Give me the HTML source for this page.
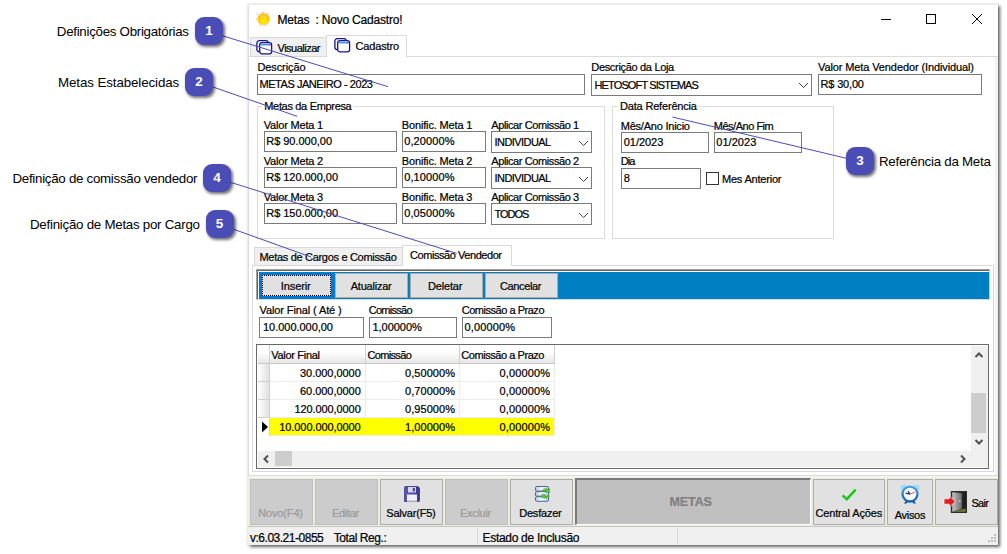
<!DOCTYPE html>
<html><head><meta charset="utf-8"><title>Metas</title>
<style>
html,body{margin:0;padding:0;background:#fff;}
body{width:1007px;height:554px;position:relative;overflow:hidden;font-family:'Liberation Sans', sans-serif;}
div,span.t,svg{position:absolute;box-sizing:border-box;}
span.t{white-space:pre;-webkit-text-stroke:0.22px currentColor;}
span.a{-webkit-text-stroke:0;}
</style></head><body>
<div style="left:246px;top:3px;width:753px;height:543px;background:#f5f5f5;"></div>
<div style="left:248px;top:4px;width:750px;height:541px;background:#fff;box-shadow:2px 2px 3px 0px rgba(0,0,0,.6);border-top:1px solid #ececec;border-left:1px solid #e0e0e0;"></div>
<svg style="left:255px;top:10px" width="18" height="18" viewBox="0 0 18 18"><defs><radialGradient id="sun" cx=".5" cy=".72" r=".75"><stop offset="0" stop-color="#fff400"/><stop offset=".55" stop-color="#ffd000"/><stop offset=".85" stop-color="#ffb000"/><stop offset="1" stop-color="#ff9800"/></radialGradient></defs><g fill="#ffa21a" opacity=".75"><circle cx="2.300" cy="4.200" r=".6"/><circle cx="1.500" cy="9.300" r=".7"/><circle cx="5.200" cy="15.200" r=".7"/><circle cx="10.500" cy="15.300" r=".7"/><circle cx="15" cy="10" r=".6"/><circle cx="13" cy="3.800" r=".7"/><circle cx="8" cy="2.600" r=".8"/><circle cx="3.300" cy="12.500" r=".6"/></g><circle cx="8.600" cy="9" r="6.300" fill="#ffb43c" opacity=".5"/><circle cx="8.600" cy="9" r="5.600" fill="url(#sun)"/><ellipse cx="8.600" cy="6" rx="3.600" ry="1.700" fill="#ffe060" opacity=".55"/></svg>
<svg style="left:876px;top:9px" width="112" height="20" viewBox="0 0 112 20" fill="none" stroke="#000" stroke-width="1"><path d="M5 10.5h10"/><rect x="50.5" y="5.5" width="9" height="9"/><path d="M96 5l10 10M106 5l-10 10"/></svg>
<div style="left:248px;top:56px;width:750px;height:420px;background:#fff;border:1px solid #dcdcdc;"></div>
<div style="left:995px;top:57px;width:3px;height:418px;background:#f3f3f3;"></div>
<div style="left:250px;top:37px;width:77px;height:20px;background:#f0f0f0;border:1px solid #d9d9d9;"></div>
<div style="left:326px;top:35px;width:81px;height:22px;background:#fff;border:1px solid #d9d9d9;border-bottom:none;"></div>
<svg style="left:256px;top:39.5px" width="17" height="15" viewBox="0 0 17 15" fill="#fff" stroke="#15158c" stroke-width="1.3"><rect x="0.9" y="0.7" width="11.2" height="11" rx="2.2"/><rect x="3.700" y="2.600" width="11.900" height="11.200" rx="2.200"/><path d="M4.600 4.600h10.200" stroke="#3f92ee" stroke-width="1.700"/><path d="M13.300 4.600h1.300" stroke="#e03030" stroke-width="1.200"/></svg>
<svg style="left:334px;top:37.5px" width="17" height="15" viewBox="0 0 17 15" fill="#fff" stroke="#15158c" stroke-width="1.3"><rect x="0.9" y="0.7" width="11.2" height="11" rx="2.2"/><rect x="3.700" y="2.600" width="11.900" height="11.200" rx="2.200"/><path d="M4.600 4.600h10.200" stroke="#3f92ee" stroke-width="1.700"/><path d="M13.300 4.600h1.300" stroke="#e03030" stroke-width="1.200"/></svg>
<div style="left:257px;top:74px;width:328px;height:21px;background:#fff;border:1px solid #7a7a7a;"></div>
<div style="left:591px;top:74px;width:221px;height:22px;background:#fff;border:1px solid #7a7a7a;"></div>
<svg style="left:798px;top:82px" width="11" height="7" viewBox="0 0 11 7" fill="none" stroke="#404040" stroke-width="1"><path d="M1 1l4.5 4.5L10 1"/></svg>
<div style="left:818px;top:74px;width:164px;height:21px;background:#fff;border:1px solid #7a7a7a;"></div>
<div style="left:257px;top:106px;width:348px;height:133px;border:1px solid #dcdcdc;"></div>
<div style="left:612px;top:106px;width:222px;height:133px;border:1px solid #dcdcdc;"></div>
<div style="left:262px;top:100px;width:92px;height:12px;background:#fff;"></div>
<div style="left:618px;top:100px;width:81px;height:12px;background:#fff;"></div>
<div style="left:264px;top:131px;width:133px;height:21px;background:#fff;border:1px solid #7a7a7a;"></div>
<div style="left:402px;top:131px;width:84px;height:21px;background:#fff;border:1px solid #7a7a7a;"></div>
<div style="left:491px;top:131px;width:101px;height:22px;background:#fff;border:1px solid #7a7a7a;"></div>
<svg style="left:577.5px;top:139.5px" width="11" height="7" viewBox="0 0 11 7" fill="none" stroke="#404040" stroke-width="1"><path d="M1 1l4.5 4.5L10 1"/></svg>
<div style="left:264px;top:167px;width:133px;height:21px;background:#fff;border:1px solid #7a7a7a;"></div>
<div style="left:402px;top:167px;width:84px;height:21px;background:#fff;border:1px solid #7a7a7a;"></div>
<div style="left:491px;top:167px;width:101px;height:22px;background:#fff;border:1px solid #7a7a7a;"></div>
<svg style="left:577.5px;top:175.5px" width="11" height="7" viewBox="0 0 11 7" fill="none" stroke="#404040" stroke-width="1"><path d="M1 1l4.5 4.5L10 1"/></svg>
<div style="left:264px;top:203px;width:133px;height:21px;background:#fff;border:1px solid #7a7a7a;"></div>
<div style="left:402px;top:203px;width:84px;height:21px;background:#fff;border:1px solid #7a7a7a;"></div>
<div style="left:491px;top:203px;width:101px;height:22px;background:#fff;border:1px solid #7a7a7a;"></div>
<svg style="left:577.5px;top:211.5px" width="11" height="7" viewBox="0 0 11 7" fill="none" stroke="#404040" stroke-width="1"><path d="M1 1l4.5 4.5L10 1"/></svg>
<div style="left:621px;top:132px;width:88px;height:21px;background:#fff;border:1px solid #7a7a7a;"></div>
<div style="left:714px;top:132px;width:88px;height:21px;background:#fff;border:1px solid #7a7a7a;"></div>
<div style="left:621px;top:168px;width:80px;height:21px;background:#fff;border:1px solid #7a7a7a;"></div>
<div style="left:706px;top:172px;width:13px;height:13px;background:#fff;border:1px solid #333;"></div>
<div style="left:252px;top:265px;width:742px;height:207px;background:#fff;border:1px solid #d9d9d9;"></div>
<div style="left:254px;top:247px;width:149px;height:19px;background:#f0f0f0;border:1px solid #d9d9d9;"></div>
<div style="left:402px;top:245px;width:110px;height:21px;background:#fff;border:1px solid #d9d9d9;border-bottom:none;"></div>
<div style="left:256px;top:269px;width:734px;height:31px;background:#fff;border-top:1px solid #a0a0a0;border-left:1px solid #a0a0a0;border-right:1px solid #c8c8c8;border-bottom:1px solid #d8d8d8;"></div>
<div style="left:257px;top:270px;width:732px;height:29px;border-top:1px solid #646464;border-left:1px solid #646464;"></div>
<div style="left:259px;top:272px;width:730px;height:27px;background:#007fc3;"></div>
<div style="left:260px;top:273px;width:73px;height:25px;background:#e1e1e1;border:2px solid #0078d7;"><div style="left:0;top:0;right:0;bottom:0;border:1px dotted #000;"></div></div>
<div style="left:335px;top:273px;width:73px;height:25px;background:#e1e1e1;border:1px solid #adadad;"></div>
<div style="left:410px;top:273px;width:73px;height:25px;background:#e1e1e1;border:1px solid #adadad;"></div>
<div style="left:485px;top:273px;width:73px;height:25px;background:#e1e1e1;border:1px solid #adadad;"></div>
<div style="left:259px;top:317px;width:105px;height:21px;background:#fff;border:1px solid #7a7a7a;"></div>
<div style="left:369px;top:317px;width:88px;height:21px;background:#fff;border:1px solid #7a7a7a;"></div>
<div style="left:462px;top:317px;width:90px;height:21px;background:#fff;border:1px solid #7a7a7a;"></div>
<div style="left:256px;top:344px;width:733px;height:125px;background:#fff;border:1px solid #696969;"></div>
<div style="left:258px;top:345px;width:12px;height:19px;background:linear-gradient(#fff,#fff 40%,#e6e6e6);border-right:1px solid #d0d0d0;border-bottom:1px solid #c8c8c8;"></div>
<div style="left:270px;top:345px;width:96px;height:19px;background:linear-gradient(#fff,#fff 40%,#e6e6e6);border-right:1px solid #d0d0d0;border-bottom:1px solid #c8c8c8;"></div>
<div style="left:366px;top:345px;width:94px;height:19px;background:linear-gradient(#fff,#fff 40%,#e6e6e6);border-right:1px solid #d0d0d0;border-bottom:1px solid #c8c8c8;"></div>
<div style="left:460px;top:345px;width:95px;height:19px;background:linear-gradient(#fff,#fff 40%,#e6e6e6);border-right:1px solid #d0d0d0;border-bottom:1px solid #c8c8c8;"></div>
<div style="left:258px;top:364px;width:12px;height:18px;background:linear-gradient(90deg,#fff,#e0e0e0);border-right:1px solid #d0d0d0;border-bottom:1px solid #d0d0d0;"></div>
<div style="left:270px;top:364px;width:96px;height:18px;background:#fff;border-right:1px solid #ececec;border-bottom:1px solid #ececec;"></div>
<div style="left:366px;top:364px;width:94px;height:18px;background:#fff;border-right:1px solid #ececec;border-bottom:1px solid #ececec;"></div>
<div style="left:460px;top:364px;width:95px;height:18px;background:#fff;border-right:1px solid #ececec;border-bottom:1px solid #ececec;"></div>
<div style="left:258px;top:382px;width:12px;height:18px;background:linear-gradient(90deg,#fff,#e0e0e0);border-right:1px solid #d0d0d0;border-bottom:1px solid #d0d0d0;"></div>
<div style="left:270px;top:382px;width:96px;height:18px;background:#fff;border-right:1px solid #ececec;border-bottom:1px solid #ececec;"></div>
<div style="left:366px;top:382px;width:94px;height:18px;background:#fff;border-right:1px solid #ececec;border-bottom:1px solid #ececec;"></div>
<div style="left:460px;top:382px;width:95px;height:18px;background:#fff;border-right:1px solid #ececec;border-bottom:1px solid #ececec;"></div>
<div style="left:258px;top:400px;width:12px;height:18px;background:linear-gradient(90deg,#fff,#e0e0e0);border-right:1px solid #d0d0d0;border-bottom:1px solid #d0d0d0;"></div>
<div style="left:270px;top:400px;width:96px;height:18px;background:#fff;border-right:1px solid #ececec;border-bottom:1px solid #ececec;"></div>
<div style="left:366px;top:400px;width:94px;height:18px;background:#fff;border-right:1px solid #ececec;border-bottom:1px solid #ececec;"></div>
<div style="left:460px;top:400px;width:95px;height:18px;background:#fff;border-right:1px solid #ececec;border-bottom:1px solid #ececec;"></div>
<div style="left:258px;top:418px;width:12px;height:18px;background:#fff;border-right:1px solid #d0d0d0;"></div>
<div style="left:270px;top:418px;width:96px;height:18px;background:#ffff00;border-right:1px solid #ececec;border-bottom:1px solid #ececec;"></div>
<div style="left:366px;top:418px;width:94px;height:18px;background:#ffff00;border-right:1px solid #ececec;border-bottom:1px solid #ececec;"></div>
<div style="left:460px;top:418px;width:95px;height:18px;background:#ffff00;border-right:1px solid #ececec;border-bottom:1px solid #ececec;"></div>
<svg style="left:260.500px;top:420.500px" width="8" height="12" viewBox="0 0 8 12"><path d="M1 0.5l6 5.5-6 5.5z" fill="#000"/></svg>
<div style="left:971px;top:346px;width:17px;height:105px;background:#f0f0f0;"></div>
<div style="left:971px;top:393px;width:15px;height:40px;background:#cdcdcd;"></div>
<div style="left:258px;top:451px;width:730px;height:16px;background:#f0f0f0;"></div>
<div style="left:275px;top:451px;width:17px;height:15px;background:#cdcdcd;"></div>
<svg style="left:974px;top:350px" width="10" height="10" viewBox="0 0 10 10" fill="none" stroke="#505050" stroke-width="2"><path d="M1.5 7l3.5-3.5L8.500 7"/></svg>
<svg style="left:974px;top:437px" width="10" height="10" viewBox="0 0 10 10" fill="none" stroke="#505050" stroke-width="2"><path d="M1.5 3l3.5 3.500L8.500 3"/></svg>
<svg style="left:261px;top:454px" width="10" height="10" viewBox="0 0 10 10" fill="none" stroke="#505050" stroke-width="2"><path d="M7 1.5l-3.500 3.5L7 8.500"/></svg>
<svg style="left:957.5px;top:454px" width="10" height="10" viewBox="0 0 10 10" fill="none" stroke="#505050" stroke-width="2"><path d="M3 1.5l3.500 3.5L3 8.500"/></svg>
<div style="left:248px;top:476px;width:750px;height:2px;background:#f4f4f4;"></div>
<div style="left:248px;top:478px;width:750px;height:48px;background:#ededda;"></div>
<div style="left:250px;top:479px;width:63px;height:46px;background:#cccccc;border:1px solid #bfbfbf;"></div>
<div style="left:315px;top:479px;width:63px;height:46px;background:#cccccc;border:1px solid #bfbfbf;"></div>
<div style="left:380px;top:479px;width:63px;height:46px;background:#e1e1e1;border:1px solid #adadad;"></div>
<div style="left:445px;top:479px;width:63px;height:46px;background:#cccccc;border:1px solid #bfbfbf;"></div>
<div style="left:510px;top:479px;width:63px;height:46px;background:#e1e1e1;border:1px solid #adadad;"></div>
<div style="left:575px;top:478px;width:236px;height:47px;background:#c0c0c0;border-top:2px solid #7a7a7a;border-left:2px solid #7a7a7a;border-right:1px solid #fff;border-bottom:1px solid #fff;"></div>
<div style="left:813px;top:479px;width:72px;height:46px;background:#e1e1e1;border:1px solid #adadad;"></div>
<div style="left:887px;top:479px;width:46px;height:46px;background:#e1e1e1;border:1px solid #adadad;"></div>
<div style="left:935px;top:479px;width:63px;height:46px;background:#e1e1e1;border:1px solid #adadad;"></div>
<div style="left:248px;top:526px;width:750px;height:19px;background:#f0f0f0;border-top:1px solid #c4c4c4;"></div>
<div style="left:477px;top:528px;width:1px;height:16px;background:#d7d7d7;"></div>
<div style="left:677px;top:528px;width:1px;height:16px;background:#d7d7d7;"></div>
<svg style="left:986px;top:534px" width="11" height="11" viewBox="0 0 11 11" fill="#bfbfbf"><rect x="8" y="0" width="2" height="2"/><rect x="5" y="3" width="2" height="2"/><rect x="8" y="3" width="2" height="2"/><rect x="2" y="6" width="2" height="2"/><rect x="5" y="6" width="2" height="2"/><rect x="8" y="6" width="2" height="2"/></svg>
<svg style="left:404px;top:486px" width="16" height="16" viewBox="0 0 16 16"><defs><linearGradient id="fl" x1="0" x2="1"><stop offset="0" stop-color="#5a5ab4"/><stop offset="1" stop-color="#3a3a92"/></linearGradient></defs><path d="M0.500 1.500q0-1 1-1h12.500l1.500 1.500v12.500q0 1-1 1h-13.500q-1 0-1-1z" fill="url(#fl)" stroke="#33338a" stroke-width=".8"/><rect x="4" y="1" width="8" height="5.500" fill="#d4d8ee"/><rect x="8.800" y="1.800" width="2" height="3.600" fill="#3a3a92"/><rect x="3" y="8.500" width="10" height="7" fill="#f2f2f6"/><path d="M3 15h10" stroke="#b0b0c8" stroke-width="1"/></svg>
<svg style="left:535px;top:486px" width="16" height="16" viewBox="0 0 16 16"><defs><linearGradient id="db" x1="0" x2="1"><stop offset="0" stop-color="#b9c9dc"/><stop offset=".45" stop-color="#f4f8fc"/><stop offset="1" stop-color="#c4d2e2"/></linearGradient></defs><g fill="url(#db)" stroke="#4a6896" stroke-width="1"><rect x=".5" y=".5" width="13" height="4.600" rx="1.200"/><rect x=".5" y="5.600" width="13" height="4.600" rx="1.200"/><rect x=".5" y="10.700" width="13" height="4.600" rx="1.200"/></g><path d="M7.500 4.200q3-3 6-.5l1-1 .3 3.800-3.800-.3 1.100-1q-1.800-1.400-3.500.2z" fill="#58d030" stroke="#2e9a1a" stroke-width=".5"/><path d="M14.500 10.300q-3 3.500-6.500 1l-1 1-.3-3.800 3.800.3-1.100 1q2 1.500 3.800-.5z" fill="#58d030" stroke="#2e9a1a" stroke-width=".5"/></svg>
<svg style="left:841px;top:488px" width="17" height="13" viewBox="0 0 17 13"><path d="M1.600 7.400l4.200 3.800L14.700 1.600" fill="none" stroke="#1cc81c" stroke-width="2.500"/></svg>
<svg style="left:900px;top:484px" width="20" height="20" viewBox="0 0 20 20"><defs><linearGradient id="ck" x1="0" y1="0" x2="0" y2="1"><stop offset="0" stop-color="#4aa6e8"/><stop offset="1" stop-color="#0e5aa8"/></linearGradient></defs><circle cx="3.600" cy="3.800" r="3.200" fill="#a8daf6"/><circle cx="16.400" cy="3.800" r="3.200" fill="#a8daf6"/><path d="M4 19.500l2.500-3.500h7l2.500 3.500h-2.500l-1-1.200h-5l-1 1.200z" fill="#0e4c94"/><circle cx="10" cy="10" r="8.600" fill="url(#ck)"/><circle cx="10" cy="10" r="6.300" fill="#fff"/><path d="M10 10.200l-4.500-1M10 10.200l-2-3" stroke="#1c3c78" stroke-width="1.300" fill="none"/><path d="M10 10.200l5-2" stroke="#e04040" stroke-width=".9"/></svg>
<svg style="left:943px;top:490px" width="25" height="24" viewBox="0 0 25 24"><defs><linearGradient id="dr" x1="0" x2="1"><stop offset="0" stop-color="#c4c4c4"/><stop offset="1" stop-color="#6e6e6e"/></linearGradient><linearGradient id="dk" x1="0" x2="1"><stop offset="0" stop-color="#666"/><stop offset="1" stop-color="#161616"/></linearGradient></defs><rect x="7.800" y="1" width="16.200" height="22" fill="#2c2c2c"/><rect x="9.300" y="2.300" width="13.400" height="19.400" fill="url(#dk)"/><path d="M11 21.700l11.700-3.200v3.200z" fill="#76802e"/><path d="M9.300 2.300l9.400 1.200v15.200l-9.400 3z" fill="url(#dr)"/><circle cx="16.800" cy="11" r=".8" fill="#eee"/><path d="M1 8.800h5.300V5.600l6 5.900-6 5.900v-3.200H1z" fill="#e01c24" stroke="#fff" stroke-width=".9" stroke-opacity=".85"/></svg>
<span class="t" style="left:277.50px;top:14.00px;font-size:12px;line-height:12px;letter-spacing:-0.200px;color:#000;">Metas  : Novo Cadastro!</span>
<span class="t" style="left:277.50px;top:43.00px;font-size:11px;line-height:11px;letter-spacing:-0.500px;color:#000;">Visualizar</span>
<span class="t" style="left:355.50px;top:41.00px;font-size:11px;line-height:11px;letter-spacing:-0.163px;color:#000;">Cadastro</span>
<span class="t" style="left:257.50px;top:62.00px;font-size:11px;line-height:11px;letter-spacing:-0.113px;color:#000;">Descrição</span>
<span class="t" style="left:259.50px;top:79.00px;font-size:11px;line-height:11px;letter-spacing:-0.451px;color:#000;">METAS JANEIRO - 2023</span>
<span class="t" style="left:591.25px;top:62.00px;font-size:11px;line-height:11px;letter-spacing:-0.316px;color:#000;">Descrição da Loja</span>
<span class="t" style="left:594.50px;top:80.00px;font-size:11px;line-height:11px;letter-spacing:-0.870px;color:#000;">HETOSOFT SISTEMAS</span>
<span class="t" style="left:818.00px;top:62.00px;font-size:11px;line-height:11px;letter-spacing:-0.109px;color:#000;">Valor Meta Vendedor (Individual)</span>
<span class="t" style="left:820.60px;top:79.00px;font-size:11px;line-height:11px;letter-spacing:-0.179px;color:#000;">R$ 30,00</span>
<span class="t" style="left:264.25px;top:101.00px;font-size:11px;line-height:11px;letter-spacing:-0.322px;color:#000;">Metas da Empresa</span>
<span class="t" style="left:620.00px;top:101.00px;font-size:11px;line-height:11px;letter-spacing:-0.179px;color:#000;">Data Referência</span>
<span class="t" style="left:263.75px;top:120.00px;font-size:11px;line-height:11px;letter-spacing:-0.188px;color:#000;">Valor Meta 1</span>
<span class="t" style="left:266.25px;top:136.00px;font-size:11px;line-height:11px;letter-spacing:-0.028px;color:#000;">R$ 90.000,00</span>
<span class="t" style="left:401.75px;top:120.00px;font-size:11px;line-height:11px;letter-spacing:-0.144px;color:#000;">Bonific. Meta 1</span>
<span class="t" style="left:404.25px;top:136.00px;font-size:11px;line-height:11px;letter-spacing:0.100px;color:#000;">0,20000%</span>
<span class="t" style="left:491.25px;top:120.00px;font-size:11px;line-height:11px;letter-spacing:-0.398px;color:#000;">Aplicar Comissão 1</span>
<span class="t" style="left:494.50px;top:137.00px;font-size:11px;line-height:11px;letter-spacing:-0.556px;color:#000;">INDIVIDUAL</span>
<span class="t" style="left:263.75px;top:156.00px;font-size:11px;line-height:11px;letter-spacing:-0.188px;color:#000;">Valor Meta 2</span>
<span class="t" style="left:266.25px;top:172.00px;font-size:11px;line-height:11px;letter-spacing:-0.035px;color:#000;">R$ 120.000,00</span>
<span class="t" style="left:401.75px;top:156.00px;font-size:11px;line-height:11px;letter-spacing:-0.144px;color:#000;">Bonific. Meta 2</span>
<span class="t" style="left:404.25px;top:172.00px;font-size:11px;line-height:11px;letter-spacing:0.100px;color:#000;">0,10000%</span>
<span class="t" style="left:491.25px;top:156.00px;font-size:11px;line-height:11px;letter-spacing:-0.398px;color:#000;">Aplicar Comissão 2</span>
<span class="t" style="left:494.50px;top:173.00px;font-size:11px;line-height:11px;letter-spacing:-0.556px;color:#000;">INDIVIDUAL</span>
<span class="t" style="left:263.75px;top:192.00px;font-size:11px;line-height:11px;letter-spacing:-0.188px;color:#000;">Valor Meta 3</span>
<span class="t" style="left:266.25px;top:208.00px;font-size:11px;line-height:11px;letter-spacing:-0.035px;color:#000;">R$ 150.000,00</span>
<span class="t" style="left:401.75px;top:192.00px;font-size:11px;line-height:11px;letter-spacing:-0.144px;color:#000;">Bonific. Meta 3</span>
<span class="t" style="left:404.25px;top:208.00px;font-size:11px;line-height:11px;letter-spacing:0.100px;color:#000;">0,05000%</span>
<span class="t" style="left:491.25px;top:192.00px;font-size:11px;line-height:11px;letter-spacing:-0.398px;color:#000;">Aplicar Comissão 3</span>
<span class="t" style="left:494.50px;top:209.00px;font-size:11px;line-height:11px;letter-spacing:-1.005px;color:#000;">TODOS</span>
<span class="t" style="left:620.75px;top:121.00px;font-size:11px;line-height:11px;letter-spacing:-0.224px;color:#000;">Mês/Ano Inicio</span>
<span class="t" style="left:713.75px;top:121.00px;font-size:11px;line-height:11px;letter-spacing:-0.480px;color:#000;">Mês/Ano Fim</span>
<span class="t" style="left:623.75px;top:137.00px;font-size:11px;line-height:11px;letter-spacing:-0.044px;color:#000;">01/2023</span>
<span class="t" style="left:716.25px;top:137.00px;font-size:11px;line-height:11px;letter-spacing:0.039px;color:#000;">01/2023</span>
<span class="t" style="left:620.75px;top:156.00px;font-size:11px;line-height:11px;letter-spacing:-0.883px;color:#000;">Dia</span>
<span class="t" style="left:623.75px;top:173.00px;font-size:11px;line-height:11px;letter-spacing:0.000px;color:#000;">8</span>
<span class="t" style="left:722.00px;top:174.00px;font-size:11px;line-height:11px;letter-spacing:-0.205px;color:#000;">Mes Anterior</span>
<span class="t" style="left:259.50px;top:252.00px;font-size:11px;line-height:11px;letter-spacing:-0.306px;color:#000;">Metas de Cargos e Comissão</span>
<span class="t" style="left:410.00px;top:250.00px;font-size:11px;line-height:11px;letter-spacing:-0.441px;color:#000;">Comissão Vendedor</span>
<span class="t" style="left:280.75px;top:281.00px;font-size:11px;line-height:11px;letter-spacing:-0.094px;color:#000;">Inserir</span>
<span class="t" style="left:350.75px;top:281.00px;font-size:11px;line-height:11px;letter-spacing:-0.225px;color:#000;">Atualizar</span>
<span class="t" style="left:428.00px;top:281.00px;font-size:11px;line-height:11px;letter-spacing:-0.161px;color:#000;">Deletar</span>
<span class="t" style="left:500.00px;top:281.00px;font-size:11px;line-height:11px;letter-spacing:-0.362px;color:#000;">Cancelar</span>
<span class="t" style="left:259.50px;top:305.00px;font-size:11px;line-height:11px;letter-spacing:-0.107px;color:#000;">Valor Final ( Até )</span>
<span class="t" style="left:368.75px;top:305.00px;font-size:11px;line-height:11px;letter-spacing:-0.737px;color:#000;">Comissão</span>
<span class="t" style="left:461.75px;top:305.00px;font-size:11px;line-height:11px;letter-spacing:-0.475px;color:#000;">Comissão a Prazo</span>
<span class="t" style="left:263.00px;top:322.00px;font-size:11px;line-height:11px;letter-spacing:-0.030px;color:#000;">10.000.000,00</span>
<span class="t" style="left:372.50px;top:322.00px;font-size:11px;line-height:11px;letter-spacing:-0.042px;color:#000;">1,00000%</span>
<span class="t" style="left:464.50px;top:322.00px;font-size:11px;line-height:11px;letter-spacing:0.136px;color:#000;">0,00000%</span>
<span class="t" style="left:271.25px;top:350.00px;font-size:11px;line-height:11px;letter-spacing:-0.302px;color:#000;">Valor Final</span>
<span class="t" style="left:367.50px;top:350.00px;font-size:11px;line-height:11px;letter-spacing:-0.665px;color:#000;">Comissão</span>
<span class="t" style="left:461.25px;top:350.00px;font-size:11px;line-height:11px;letter-spacing:-0.442px;color:#000;">Comissão a Prazo</span>
<span class="t" style="left:300.00px;top:368.00px;font-size:11px;line-height:11px;letter-spacing:-0.042px;color:#000;">30.000,0000</span>
<span class="t" style="left:405.00px;top:368.00px;font-size:11px;line-height:11px;letter-spacing:0.065px;color:#000;">0,50000%</span>
<span class="t" style="left:499.50px;top:368.00px;font-size:11px;line-height:11px;letter-spacing:0.136px;color:#000;">0,00000%</span>
<span class="t" style="left:300.00px;top:386.00px;font-size:11px;line-height:11px;letter-spacing:-0.042px;color:#000;">60.000,0000</span>
<span class="t" style="left:405.00px;top:386.00px;font-size:11px;line-height:11px;letter-spacing:0.065px;color:#000;">0,70000%</span>
<span class="t" style="left:499.50px;top:386.00px;font-size:11px;line-height:11px;letter-spacing:0.136px;color:#000;">0,00000%</span>
<span class="t" style="left:294.50px;top:404.00px;font-size:11px;line-height:11px;letter-spacing:-0.095px;color:#000;">120.000,0000</span>
<span class="t" style="left:405.00px;top:404.00px;font-size:11px;line-height:11px;letter-spacing:0.065px;color:#000;">0,95000%</span>
<span class="t" style="left:499.50px;top:404.00px;font-size:11px;line-height:11px;letter-spacing:0.136px;color:#000;">0,00000%</span>
<span class="t" style="left:279.25px;top:422.00px;font-size:11px;line-height:11px;letter-spacing:-0.078px;color:#000;">10.000.000,0000</span>
<span class="t" style="left:405.00px;top:422.00px;font-size:11px;line-height:11px;letter-spacing:0.065px;color:#000;">1,00000%</span>
<span class="t" style="left:499.50px;top:422.00px;font-size:11px;line-height:11px;letter-spacing:0.136px;color:#000;">0,00000%</span>
<span class="t" style="left:258.25px;top:508.00px;font-size:11px;line-height:11px;letter-spacing:-0.156px;color:#9a9a9a;">Novo(F4)</span>
<span class="t" style="left:332.00px;top:508.00px;font-size:11px;line-height:11px;letter-spacing:-0.300px;color:#9a9a9a;">Editar</span>
<span class="t" style="left:386.25px;top:508.00px;font-size:11px;line-height:11px;letter-spacing:-0.205px;color:#000;">Salvar(F5)</span>
<span class="t" style="left:460.00px;top:508.00px;font-size:11px;line-height:11px;letter-spacing:-0.294px;color:#9a9a9a;">Excluir</span>
<span class="t" style="left:519.25px;top:508.00px;font-size:11px;line-height:11px;letter-spacing:-0.219px;color:#000;">Desfazer</span>
<span class="t" style="left:669.50px;top:496.00px;font-size:12.5px;line-height:12.5px;letter-spacing:-0.107px;color:#808080;font-weight:bold;">METAS</span>
<span class="t" style="left:815.40px;top:508.00px;font-size:11px;line-height:11px;letter-spacing:-0.140px;color:#000;">Central Ações</span>
<span class="t" style="left:894.80px;top:510.00px;font-size:11px;line-height:11px;letter-spacing:-0.321px;color:#000;">Avisos</span>
<span class="t" style="left:971.50px;top:498.00px;font-size:11px;line-height:11px;letter-spacing:-0.754px;color:#000;">Sair</span>
<span class="t" style="left:250.00px;top:532.00px;font-size:12px;line-height:12px;letter-spacing:-0.486px;color:#000;">v:6.03.21-0855</span>
<span class="t" style="left:333.75px;top:532.00px;font-size:12px;line-height:12px;letter-spacing:-0.438px;color:#000;">Total Reg.:</span>
<span class="t" style="left:482.50px;top:532.00px;font-size:12px;line-height:12px;letter-spacing:-0.299px;color:#000;">Estado de Inclusão</span>
<svg style="left:0;top:0" width="1007" height="554" viewBox="0 0 1007 554" fill="none" stroke="#4a4db6" stroke-width="1"><path d="M222.500 35.750L388 86.700M213 87L297 116.300M230.500 182.300L456.800 253.400M234 229.400L311 257M672.500 117L846 158.200"/></svg><div style="left:195px;top:17px;width:28px;height:28px;border-radius:9px;background:#4a4db6;box-shadow:1.5px 2px 3px rgba(0,0,0,.55);color:#fff;font-weight:bold;font-size:13.500px;line-height:28px;text-align:center;">1</div><div style="left:185px;top:68px;width:28px;height:28px;border-radius:9px;background:#4a4db6;box-shadow:1.5px 2px 3px rgba(0,0,0,.55);color:#fff;font-weight:bold;font-size:13.500px;line-height:28px;text-align:center;">2</div><div style="left:203px;top:164px;width:28px;height:28px;border-radius:9px;background:#4a4db6;box-shadow:1.5px 2px 3px rgba(0,0,0,.55);color:#fff;font-weight:bold;font-size:13.500px;line-height:28px;text-align:center;">4</div><div style="left:205.5px;top:210px;width:28px;height:28px;border-radius:9px;background:#4a4db6;box-shadow:1.5px 2px 3px rgba(0,0,0,.55);color:#fff;font-weight:bold;font-size:13.500px;line-height:28px;text-align:center;">5</div><div style="left:846px;top:147px;width:28px;height:28px;border-radius:9px;background:#4a4db6;box-shadow:1.5px 2px 3px rgba(0,0,0,.55);color:#fff;font-weight:bold;font-size:13.500px;line-height:28px;text-align:center;">3</div>
<span class="t a" style="left:56.80px;top:25.00px;font-size:13.33px;line-height:13.33px;letter-spacing:-0.288px;color:#000;">Definições Obrigatórias</span>
<span class="t a" style="left:58.00px;top:76.00px;font-size:13.33px;line-height:13.33px;letter-spacing:-0.096px;color:#000;">Metas Estabelecidas</span>
<span class="t a" style="left:12.50px;top:172.00px;font-size:13.33px;line-height:13.33px;letter-spacing:-0.289px;color:#000;">Definição de comissão vendedor</span>
<span class="t a" style="left:30.00px;top:218.00px;font-size:13.33px;line-height:13.33px;letter-spacing:-0.262px;color:#000;">Definição de Metas por Cargo</span>
<span class="t a" style="left:879.00px;top:155.00px;font-size:13.33px;line-height:13.33px;letter-spacing:-0.266px;color:#000;">Referência da Meta</span>
</body></html>
